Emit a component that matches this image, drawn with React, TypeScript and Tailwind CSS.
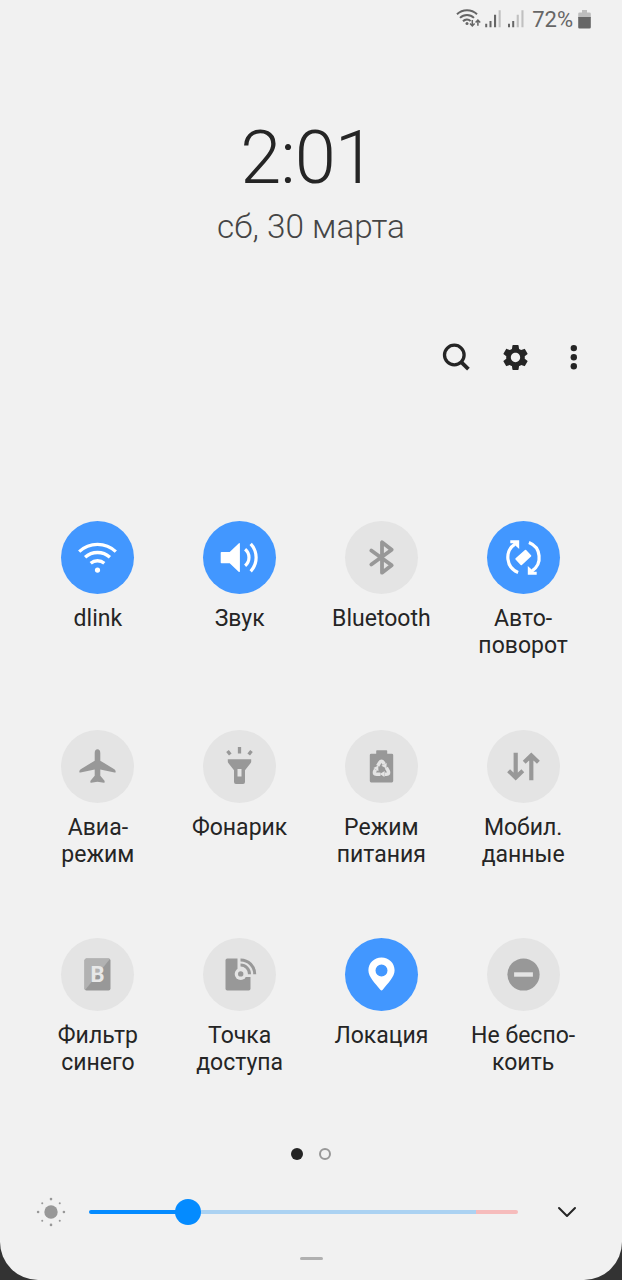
import type { ReactNode } from "react";
import { MdSettings } from "react-icons/md";

interface Tile { id: string; lines: string[]; active?: boolean; icon: ReactNode; }

const round = { strokeLinecap: "round", strokeLinejoin: "round" } as const;

// Every icon is drawn around 0,0, the centre of its circle
const TILES: Tile[] = [
  {
    id: "wifi", lines: ["dlink"], active: true,
    icon: (
      <>
        <g fill="none" stroke="currentColor" strokeWidth="3.3">
          <path d="M-18.3-5.9A26.6 26.6 0 0 1 18.3-5.9" />
          <path d="M-12.4-.2A18.4 18.4 0 0 1 12.4-.2" />
          <path d="M-6.8 5.8A10.4 10.4 0 0 1 6.8 5.8" />
        </g>
        <circle cy="12.6" r="2.6" fill="currentColor" />
      </>
    ),
  },
  {
    id: "sound", lines: ["Звук"], active: true,
    icon: (
      <>
        <path d="M-18-5.6H-9.8L-.6-14.2Q.4-14.8.4-13.6V13.8Q.4 15-.6 14.4L-9.8 5.8H-18Q-18.8 5.8-18.8 5V-4.8Q-18.8-5.6-18-5.6Z" fill="currentColor" />
        <g fill="none" stroke="currentColor" strokeWidth="3.2">
          <path d="M5.6-8.2A10.6 10.6 0 0 1 5.6 8.2" />
          <path d="M11.2-13.6A20 20 0 0 1 11.2 13.8" />
        </g>
      </>
    ),
  },
  {
    id: "bluetooth", lines: ["Bluetooth"],
    icon: <path d="M-10.2 7L10.2-7.8L.5-15.2V15.2L10.2 7.8L-10.2-7" fill="none" stroke="currentColor" strokeWidth="3.8" {...round} />,
  },
  {
    id: "rotate", lines: ["Авто-", "поворот"], active: true,
    icon: (
      <>
        <g fill="none" stroke="currentColor" strokeWidth="3.2">
          <path d="M-5.4 14.9A16 16 0 0 1-8.6-13.3" />
          <path d="M5.4-14.9A16 16 0 0 1 8.6 13.3" />
        </g>
        <path d="M-13.2-17.2H-4.3V-8.4L-7.6-11.6L-10-14.2H-13.2Z" fill="currentColor" />
        <path d="M13.2 17.2H4.3V8.4L7.6 11.6L10 14.2H13.2Z" fill="currentColor" />
        <path d="M-7.3 1.4L2-6.8L6.9-1.6L-2.2 6.8Z" fill="currentColor" stroke="currentColor" strokeWidth="1.8" strokeLinejoin="round" />
      </>
    ),
  },
  {
    id: "airplane", lines: ["Авиа-", "режим"],
    icon: <path d="M0-17.2C1.8-17.2 2.8-15.5 2.8-13.5V-5.8L16.4 2.5C17.4 3.2 18 3.8 18.2 5.2Q18.2 6.3 17 6L2.8 3V9.2L7 14.2Q7.6 16.6 6.4 16.3L0 15.2L-6.4 16.3Q-7.6 16.6-7 14.2L-2.8 9.2V3L-17 6Q-18.2 6.3-18.2 5.2C-18 3.8-17.4 3.2-16.4 2.5L-2.8-5.8V-13.5C-2.8-15.5-1.8-17.2 0-17.2Z" fill="currentColor" />,
  },
  {
    id: "flashlight", lines: ["Фонарик"],
    icon: (
      <>
        <path d="M-11.7-7.2H11.7V-5Q11.7-4.2 11.2-3.6L5.5 3.8V15.4Q5.5 17.4 3.5 17.4H-3.5Q-5.5 17.4-5.5 15.4V3.8L-11.2-3.6Q-11.7-4.2-11.7-5ZM-2 2.6V10H2V2.6Z" fillRule="evenodd" fill="currentColor" />
        <path d="M0-19.4V-13M-12-15.6L-9.2-12M12-15.6L9.2-12" stroke="currentColor" strokeWidth="3.3" fill="none" />
      </>
    ),
  },
  {
    id: "power", lines: ["Режим", "питания"],
    icon: (
      <>
        <rect x="-11.7" y="-12.8" width="23.4" height="28.8" rx="1.4" fill="currentColor" />
        <rect x="-5.3" y="-16.2" width="11" height="5" rx=".8" fill="currentColor" />
        {[0, 120, 240].map((a) => (
          <g key={a} transform={`translate(0 2.8) rotate(${a})`}>
            <path d="M-3.8-3.4L-1.9-6.7Q0-9.6 1.9-6.7L2.7-5.2" fill="none" stroke="#e4e4e4" strokeWidth="3.5" />
            <path d="M-.1-3.6L5.2-6.4L4.9-.9Z" fill="#e4e4e4" />
          </g>
        ))}
      </>
    ),
  },
  {
    id: "data", lines: ["Мобил.", "данные"],
    icon: <path d="M-7.8-13.8V11M-14.9 4.3L-7.8 11L-.7 4.3M7.8 13.8V-11M.7-4.3L7.8-11L14.9-4.3" fill="none" stroke="currentColor" strokeWidth="4.2" />,
  },
  {
    id: "blue", lines: ["Фильтр", "синего"],
    icon: (
      <>
        <rect x="-13" y="-16" width="26" height="32" rx="2" fill="currentColor" />
        <path d="M12.4-15.4Q12-16 11-16H-11Q-13-16-13-14V14Q-13 15-12.4 15.4Z" fill="#b2b2b2" />
        <text x="0" y="7.2" textAnchor="middle" fontSize="22" fontWeight="700" fill="#e8e8e8">B</text>
      </>
    ),
  },
  {
    id: "hotspot", lines: ["Точка", "доступа"],
    icon: (
      <>
        <path d="M-12.2-16H-2V2.6H11V14.2Q11 16 9.2 16H-12.2Q-14 16-14 14.2V-14.2Q-14-16-12.2-16Z" fill="currentColor" />
        <circle cx="1.2" cy="-.6" r="6" fill="#e4e4e4" />
        <circle cx="1.2" cy="-.6" r="2.7" fill="currentColor" />
        <g fill="none" stroke="currentColor" strokeWidth="3">
          <path d="M1-9.4A8.9 8.9 0 0 1 10 -.2" />
          <path d="M1-14.6A14.1 14.1 0 0 1 15.2 -.2" />
        </g>
      </>
    ),
  },
  {
    id: "location", lines: ["Локация"], active: true,
    icon: <path d="M0-17C7.4-17 13.1-11.5 13.1-4.2C13.1 2.5 6.5 8.6 1.2 15.3Q0 16.6-1.2 15.3C-6.5 8.6-13.1 2.5-13.1-4.2C-13.1-11.5-7.4-17 0-17ZM0-10A6 6 0 1 0 0 2A6 6 0 1 0 0-10Z" fillRule="evenodd" fill="currentColor" />,
  },
  {
    id: "dnd", lines: ["Не беспо-", "коить"],
    icon: (
      <>
        <circle r="16.1" fill="currentColor" />
        <rect x="-9.4" y="-2.2" width="18.8" height="4.4" fill="#e4e4e4" />
      </>
    ),
  },
];

function StatusBar() {
  return (
    <div className="flex h-[39px] items-center justify-end pr-[31px] text-[#666]">
      <svg width="70" height="24" viewBox="455 7.5 70 24" className="mr-[7px]">
        <g fill="none" stroke="currentColor" strokeWidth="2">
          <path d="M457 13.7A14.5 14.5 0 0 1 477 13.7" />
          <path d="M460 17.4A10 10 0 0 1 474 17.4" />
          <path d="M463 20.8A5.6 5.6 0 0 1 470.6 20.4" />
          <path d="M472.3 19.5V25.5M470 23L472.3 25.5L474.6 23M477.9 25.2V19.5M475.6 22L477.9 19.5L480.2 22" strokeWidth="1.5" />
        </g>
        <circle cx="467" cy="23" r="1.5" fill="currentColor" />
        <g fill="currentColor">
          <path d="M485.2 23.3h2v3.4h-2zM489.5 20.5h2v6.2h-2zM494 14.3h2.1v12.4h-2.1z" />
          <path d="M508 23.3h2v3.4h-2zM512.2 20.5h2v6.2h-2z" />
        </g>
        <path d="M498.6 9.8h2.1v16.9h-2.1zM516.7 14.3h2.1v12.4h-2.1zM521.4 9.8h2.1v16.9h-2.1z" fill="#c0c0c0" />
      </svg>
      <span className="text-[22px] leading-none">72%</span>
      <svg width="13" height="20" viewBox="0 0 13 20" className="ml-[5px]">
        <path d="M4 0h5v2.5h2.5q1.3 0 1.3 1.3V8H.2V3.8q0-1.3 1.3-1.3H4z" fill="#bdbdbd" />
        <path d="M.2 7H12.8v10.2q0 1.3-1.3 1.3H1.5q-1.3 0-1.3-1.3z" fill="currentColor" />
      </svg>
    </div>
  );
}

function Actions() {
  return (
    <div className="mt-[95px] flex items-center gap-[29px] pl-[441px] text-[#252525]">
      <svg width="30" height="32" viewBox="0 0 30 32">
        <circle cx="13.3" cy="14" r="9.8" fill="none" stroke="currentColor" strokeWidth="3.3" />
        <path d="M20 20.8L27.4 28.2" stroke="currentColor" strokeWidth="3.8" />
      </svg>
      <MdSettings size={31} />
      <svg width="30" height="32" viewBox="0 0 30 32" fill="currentColor">
        <circle cx="13.8" cy="7.1" r="3.2" />
        <circle cx="13.8" cy="16.2" r="3.2" />
        <circle cx="13.8" cy="25.3" r="3.2" />
      </svg>
    </div>
  );
}

function QuickTile({ tile }: { tile: Tile }) {
  return (
    <button className="flex flex-col items-center">
      <span className={`size-[73px] rounded-full ${tile.active ? "bg-[#4297ff] text-white" : "bg-[#e4e4e4] text-[#989898]"}`}>
        <svg width="73" height="73" viewBox="-36.5 -36.5 73 73">{tile.icon}</svg>
      </span>
      <span className="mt-[11px] text-[23px] leading-[27px] whitespace-nowrap text-[#252525]">
        {tile.lines.map((line) => <span key={line} className="block">{line}</span>)}
      </span>
    </button>
  );
}

function Brightness() {
  return (
    <div className="mt-[37px] flex items-center pl-9">
      <svg width="30" height="30" viewBox="-15 -15 30 30" fill="#989898">
        <circle r="6.7" />
        {[0, 45, 90, 135, 180, 225, 270, 315].map((a) => (
          <circle key={a} cx={a % 90 ? 12.4 : 12.9} r={a % 90 ? 1 : 1.3} transform={`rotate(${a})`} />
        ))}
      </svg>
      <div className="relative ml-[23px] flex h-1 w-[429px] overflow-visible">
        <div className="w-[99px] rounded-l-full bg-[#048bff]" />
        <div className="w-[288px] bg-[#abd2f2]" />
        <div className="flex-1 rounded-r-full bg-[#f6bcbc]" />
        <div className="absolute -top-[11px] left-[86px] size-[26px] rounded-full bg-[#048bff]" />
      </div>
      <svg width="20" height="12" viewBox="0 0 20 12" className="ml-[39px]">
        <path d="M2 2L10 10L18 2" fill="none" stroke="#252525" strokeWidth="2" {...round} />
      </svg>
    </div>
  );
}

export default function App() {
  return (
    <div className="h-[1280px] w-[622px] overflow-hidden bg-[#333] font-['Roboto','Noto_Sans',sans-serif]">
      <div className="flex h-full flex-col rounded-b-[38px] bg-[#f1f1f1]">
        <StatusBar />

        {/* Clock */}
        <div className="mt-[82px] text-center">
          <div className="pr-[7px] text-[74px] leading-[73px] font-light tracking-[-1px] text-[#252525]">2:01</div>
          <div className="mt-[14px] text-[33.3px] leading-[38px] font-light text-[#454545]">сб, 30 марта</div>
        </div>

        <Actions />

        <div className="mt-[148px] ml-[27px] grid w-[567px] auto-rows-[208.7px] grid-cols-4 items-start">
          {TILES.map((tile) => <QuickTile key={tile.id} tile={tile} />)}
        </div>

        {/* Pages */}
        <div className="mt-px flex justify-center gap-4">
          <span className="size-3 rounded-full bg-[#252525]" />
          <span className="size-3 rounded-full border-2 border-[#989898]" />
        </div>

        <Brightness />

        <div className="mt-[30px] h-[3px] w-[23px] self-center rounded-full bg-[#b0b0b0]" />
      </div>
    </div>
  );
}
